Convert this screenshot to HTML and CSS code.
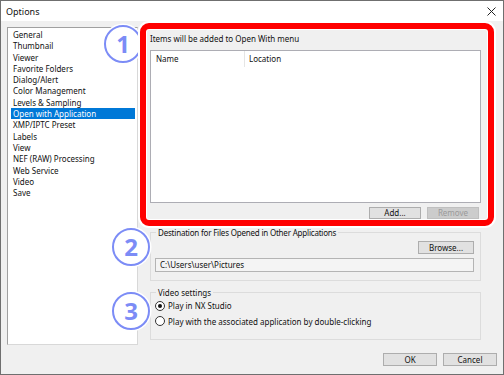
FILE: index.html
```html
<!DOCTYPE html>
<html lang="en">
<head>
    <meta charset="UTF-8">
    <title>Options</title>
    <link rel="stylesheet" href="styles.css">
</head>
<body>
    <div class="window">
        <div class="titlebar">
            <span class="title">Options</span>
            <svg class="close" width="9" height="9" viewBox="0 0 9 9">
                <path d="M0.5 0.5 L8.5 8.5 M8.5 0.5 L0.5 8.5" stroke="#222" stroke-width="1" fill="none"/>
            </svg>
        </div>

        <div class="content">
            <ul class="categories">
                <li>General</li>
                <li>Thumbnail</li>
                <li>Viewer</li>
                <li>Favorite Folders</li>
                <li>Dialog/Alert</li>
                <li>Color Management</li>
                <li>Levels &amp; Sampling</li>
                <li class="selected">Open with Application</li>
                <li>XMP/IPTC Preset</li>
                <li>Labels</li>
                <li>View</li>
                <li>NEF (RAW) Processing</li>
                <li>Web Service</li>
                <li>Video</li>
                <li>Save</li>
            </ul>

            <div class="panel">
                <div class="open-with">
                    <div class="caption">Items will be added to Open With menu</div>
                    <div class="listview">
                        <div class="listview-head">
                            <span class="col-name">Name</span>
                            <span class="col-location">Location</span>
                        </div>
                    </div>
                    <div class="button-row">
                        <button class="btn">Add...</button>
                        <button class="btn" disabled>Remove</button>
                    </div>
                </div>

                <fieldset class="group destination">
                    <legend>Destination for Files Opened in Other Applications</legend>
                    <div class="browse-row">
                        <button class="btn btn-browse">Browse...</button>
                    </div>
                    <div class="path-field">C:\Users\user\Pictures</div>
                </fieldset>

                <fieldset class="group video">
                    <legend>Video settings</legend>
                    <label class="radio"><span class="radio-dot checked"></span>Play in NX Studio</label>
                    <label class="radio"><span class="radio-dot"></span>Play with the associated application by double-clicking</label>
                </fieldset>
            </div>
        </div>

        <div class="footer">
            <button class="btn btn-wide">OK</button>
            <button class="btn btn-wide">Cancel</button>
        </div>

        <!-- callouts drawn over the dialog -->
        <div class="badge badge-1">1</div>
        <div class="badge badge-2">2</div>
        <div class="badge badge-3">3</div>
        <div class="highlight"></div>
    </div>
</body>
</html>
```

FILE: styles.css
```css
/* Dialog base */
body {
    margin: 0;
    font-family: 'Noto Sans', 'Open Sans', sans-serif;
    font-size: 8px;
    color: #111;
    background: #fff;
}

.window {
    position: relative;
    width: 504px;
    height: 375px;
    box-sizing: border-box;
    border: 1px solid #6f6f6f;
    background-color: #f0f0f0;
    overflow: hidden;
}

.titlebar {
    height: 20px;
    display: flex;
    align-items: center;
    justify-content: space-between;
    padding: 0 6px 0 5px;
    background: #fff;
    font-size: 9px;
}

.close {
    margin-right: 1px;
}

/* Main area */
.content {
    display: grid;
    grid-template-columns: 131px 331px;
    column-gap: 12px;
    padding: 6px 0 0 6px;
}

.categories {
    list-style: none;
    margin: 0;
    padding: 1px 2px 0 3px;
    height: 318px;
    box-sizing: border-box;
    background: #fff;
    border: 1px solid #a0a0a0;
    border-right-color: #d8d8d8;
    border-bottom-color: #d8d8d8;
}

.categories li {
    line-height: 11.3px;
    padding-left: 2px;
    white-space: nowrap;
}

.categories li.selected {
    background-color: #0078d7;
    color: #fff;
}

/* Open with section */
.caption {
    margin-top: 6px;
    line-height: 11px;
}

.listview {
    margin-top: 6px;
    height: 153px;
    box-sizing: border-box;
    background: #fff;
    border: 1px solid #adadb4;
}

.listview-head {
    display: flex;
    height: 16px;
    line-height: 16px;
}

.col-name {
    width: 88px;
    padding-left: 5px;
    border-right: 1px solid #e5e5e5;
}

.col-location {
    padding-left: 4px;
}

.button-row {
    display: flex;
    justify-content: flex-end;
    gap: 6px;
    margin-top: 4px;
    padding-right: 2px;
}

.btn {
    font-family: inherit;
    font-size: 8px;
    color: #111;
    width: 52px;
    height: 12px;
    padding: 0;
    line-height: 10px;
    background: #e1e1e1;
    border: 1px solid #adadad;
    border-radius: 0;
}

.btn:disabled {
    background: #cccccc;
    border-color: #bfbfbf;
    color: #9a9a9a;
}

/* Group boxes */
.group {
    margin: 0;
    padding: 0 6px 0 4px;
    border: 1px solid #dcdcdc;
}

.group legend {
    padding: 0 2px;
    margin-left: 1px;
    line-height: 11px;
}

.destination {
    margin-top: 8px;
    height: 54px;
    box-sizing: border-box;
}

.destination legend {
    letter-spacing: -0.2px;
}

.browse-row {
    display: flex;
    justify-content: flex-end;
    margin-top: 3px;
}

.btn-browse {
    width: 56px;
    height: 13px;
}

.path-field {
    margin-top: 4px;
    height: 14px;
    box-sizing: border-box;
    line-height: 12px;
    padding-left: 4px;
    border: 1px solid #b4b4b4;
    background: #f4f4f4;
}

.video {
    margin-top: 6px;
    height: 53px;
    box-sizing: border-box;
    padding-top: 0;
}

.radio {
    display: flex;
    align-items: center;
    height: 15.5px;
    gap: 3px;
    white-space: nowrap;
}

.radio-dot {
    width: 10px;
    height: 10px;
    box-sizing: border-box;
    border: 1px solid #333;
    border-radius: 50%;
    background: #fff;
    position: relative;
}

.radio-dot.checked::after {
    content: "";
    position: absolute;
    left: 2px;
    top: 2px;
    width: 4px;
    height: 4px;
    border-radius: 50%;
    background: #111;
}

/* Footer */
.footer {
    display: flex;
    justify-content: flex-end;
    gap: 6px;
    padding: 8px 6px 0 0;
}

.btn-wide {
    width: 54px;
    height: 13px;
}

/* Callout overlays */
.badge {
    position: absolute;
    width: 38px;
    height: 38px;
    box-sizing: border-box;
    border: 2.5px solid #7c8cf6;
    border-radius: 50%;
    background: #fff;
    box-shadow: 0 0 0 1.5px #fff;
    color: #7c8cf6;
    font-family: 'Open Sans', sans-serif;
    font-weight: 700;
    font-size: 24px;
    line-height: 33px;
    text-align: center;
}

.badge-1 { left: 103px; top: 24px; }
.badge-2 { left: 111px; top: 227px; }
.badge-3 { left: 111px; top: 291px; }

.highlight {
    position: absolute;
    left: 139px;
    top: 22px;
    width: 354px;
    height: 203px;
    box-sizing: border-box;
    border: 6px solid #ff0000;
    border-radius: 9px;
    box-shadow: 0 0 0 2px #fff, inset 0 0 0 1px #fff;
}
```
